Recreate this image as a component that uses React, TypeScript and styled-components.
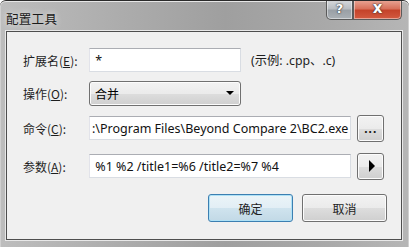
import styled, { createGlobalStyle } from 'styled-components';

const GlobalStyle = createGlobalStyle`
  html, body {
    margin: 0;
    padding: 0;
    background: #ffffff;
  }
  body {
    font-family: "Noto Sans", "Noto Sans CJK SC", sans-serif;
    font-size: 12px;
    color: #000;
  }
`;

const Window = styled.div`
  width: 409px;
  height: 247px;
  box-sizing: border-box;
  display: flex;
  flex-direction: column;
  border-top: 1px solid #2a2a2a;
  border-radius: 6px 6px 0 0;
  background: linear-gradient(90deg, #bdbdbd 0%, #acacac 30%, #9f9f9f 55%, #a9a9a9 80%, #b6b6b6 100%);
  box-shadow: inset 0 1px 0 #e6e6e6, inset 1px 0 0 #d0d0d0, inset -1px 0 0 #d0d0d0;
  overflow: hidden;
`;

const TitleBar = styled.div`
  height: 30px;
  display: flex;
  align-items: flex-start;
  justify-content: space-between;
  padding-left: 6px;
  padding-right: 7px;
`;

const Title = styled.div`
  margin-top: 8px;
  font-family: "Noto Sans CJK SC", sans-serif;
  font-size: 12.5px;
  color: #1a1a1a;
  text-shadow: 0 0 6px rgba(255, 255, 255, 0.9);
  letter-spacing: 0.3px;
`;

const Controls = styled.div`
  display: flex;
  margin-top: -1px;
`;

const CaptionButton = styled.div<{ $close?: boolean }>`
  width: ${p => (p.$close ? 49 : 27)}px;
  height: 20px;
  box-sizing: border-box;
  display: flex;
  align-items: center;
  justify-content: center;
  border: 1px solid #5a5a5a;
  border-top: none;
  border-radius: ${p => (p.$close ? '0 0 5px 0' : '0 0 0 5px')};
  box-shadow: inset 0 0 0 1px rgba(255, 255, 255, 0.45);
  background: ${p =>
    p.$close
      ? 'linear-gradient(180deg, #e9a797 0%, #d8725c 45%, #c5432a 55%, #d35a40 100%)'
      : 'linear-gradient(180deg, #d7dadd 0%, #b9bec3 45%, #9aa0a6 55%, #aab0b5 100%)'};
  color: #fff;
  font-family: "DejaVu Sans", sans-serif;
  font-weight: bold;
  font-size: ${p => (p.$close ? 15 : 13)}px;
  line-height: 1;
  padding-bottom: 2px;
  text-shadow: 0 0 2px #333, 0 0 1px #222;
`;

const Frame = styled.div`
  flex: 1;
  display: flex;
  padding: 0 7px 7px 6px;
`;

const Client = styled.div`
  flex: 1;
  display: flex;
  flex-direction: column;
  border: 1px solid #4e4e4e;
  background: #f0f0f0;
  padding: 0 14px 0 16px;
  box-shadow: 0 0 0 1px #e8e8e8;
`;

const Row = styled.div<{ $top: number }>`
  display: flex;
  align-items: center;
  height: 26px;
  margin-top: ${p => p.$top}px;
`;

const Label = styled.div`
  width: 66px;
  flex: none;
  font-family: "Noto Sans CJK SC", sans-serif;
  font-size: 12px;
  color: #1e1e1e;
  u {
    text-decoration: underline;
    text-underline-offset: 1px;
  }
`;

const TextField = styled.div<{ $width: number }>`
  width: ${p => p.$width}px;
  height: 24px;
  box-sizing: border-box;
  flex: none;
  display: flex;
  align-items: center;
  padding-left: 2px;
  background: #fff;
  border: 1px solid #d9dde3;
  border-top-color: #abadb3;
  border-left-color: #e2e3ea;
  white-space: nowrap;
  overflow: hidden;
  font-family: "Noto Sans", "Noto Sans CJK SC", sans-serif;
  font-size: 12.5px;
  color: #111;
`;

const Hint = styled.div`
  margin-left: 10px;
  font-family: "Noto Sans", "Noto Sans CJK SC", sans-serif;
  font-size: 12.3px;
  color: #1e1e1e;
`;

const Select = styled.div`
  width: 152px;
  height: 25px;
  box-sizing: border-box;
  display: flex;
  align-items: center;
  justify-content: space-between;
  padding: 0 4px 0 5px;
  border: 1px solid #707070;
  border-radius: 3px;
  box-shadow: inset 0 0 0 1px #fcfcfc;
  background: linear-gradient(180deg, #f2f2f2 0%, #ebebeb 50%, #dddddd 51%, #cfcfcf 100%);
  font-family: "Noto Sans CJK SC", sans-serif;
  font-size: 12px;
`;

const Arrow = styled.span`
  width: 0;
  height: 0;
  border-left: 4px solid transparent;
  border-right: 4px solid transparent;
  border-top: 4px solid #000;
  margin-right: 2px;
`;

const PushButton = styled.div<{ $width: number; $default?: boolean }>`
  width: ${p => p.$width}px;
  height: 27px;
  box-sizing: border-box;
  flex: none;
  display: flex;
  align-items: center;
  justify-content: center;
  border: 1px solid ${p => (p.$default ? '#3c7fb1' : '#707070')};
  border-radius: 3px;
  box-shadow: inset 0 0 0 1px ${p => (p.$default ? '#aee1f6' : '#fcfcfc')};
  background: ${p =>
    p.$default
      ? 'linear-gradient(180deg, #ebf4f8 0%, #e2eef5 50%, #cfe3ee 51%, #c2d9e6 100%)'
      : 'linear-gradient(180deg, #f2f2f2 0%, #ebebeb 50%, #dddddd 51%, #cfcfcf 100%)'};
  font-family: "Noto Sans CJK SC", sans-serif;
  font-size: 12px;
  color: #1e1e1e;
`;

const Side = styled.div`
  margin-left: 6px;
`;

const Dots = styled.span`
  font-family: "DejaVu Sans", sans-serif;
  font-weight: bold;
  font-size: 10px;
  letter-spacing: 0.5px;
  margin-top: 2px;
`;

const Play = styled.span`
  width: 0;
  height: 0;
  border-top: 6px solid transparent;
  border-bottom: 6px solid transparent;
  border-left: 6px solid #000;
  margin-left: 2px;
`;

const Footer = styled.div`
  display: flex;
  justify-content: flex-end;
  gap: 9px;
  margin-top: 15px;
  height: 28px;
`;

const DialogButton = styled(PushButton)`
  height: 28px;
`;

const App = () => {
  return (
    <>
      <GlobalStyle />
      <Window>
        <TitleBar>
          <Title>配置工具</Title>
          <Controls>
            <CaptionButton>?</CaptionButton>
            <CaptionButton $close>x</CaptionButton>
          </Controls>
        </TitleBar>
        <Frame>
          <Client>
            <Row $top={15}>
              <Label>扩展名(<u>E</u>):</Label>
              <TextField $width={152}>&nbsp;*</TextField>
              <Hint>(示例: .cpp、.c)</Hint>
            </Row>
            <Row $top={7}>
              <Label>操作(<u>O</u>):</Label>
              <Select>
                合并
                <Arrow />
              </Select>
            </Row>
            <Row $top={9}>
              <Label>命令(<u>C</u>):</Label>
              <TextField $width={262}>:\Program Files\Beyond Compare 2\BC2.exe</TextField>
              <Side>
                <PushButton $width={27}>
                  <Dots>...</Dots>
                </PushButton>
              </Side>
            </Row>
            <Row $top={12}>
              <Label>参数(<u>A</u>):</Label>
              <TextField $width={262}>&nbsp;%1 %2 /title1=%6 /title2=%7 %4</TextField>
              <Side>
                <PushButton $width={27}>
                  <Play />
                </PushButton>
              </Side>
            </Row>
            <Footer>
              <DialogButton $width={85} $default>确定</DialogButton>
              <DialogButton $width={85}>取消</DialogButton>
            </Footer>
          </Client>
        </Frame>
      </Window>
    </>
  );
};

export default App;
